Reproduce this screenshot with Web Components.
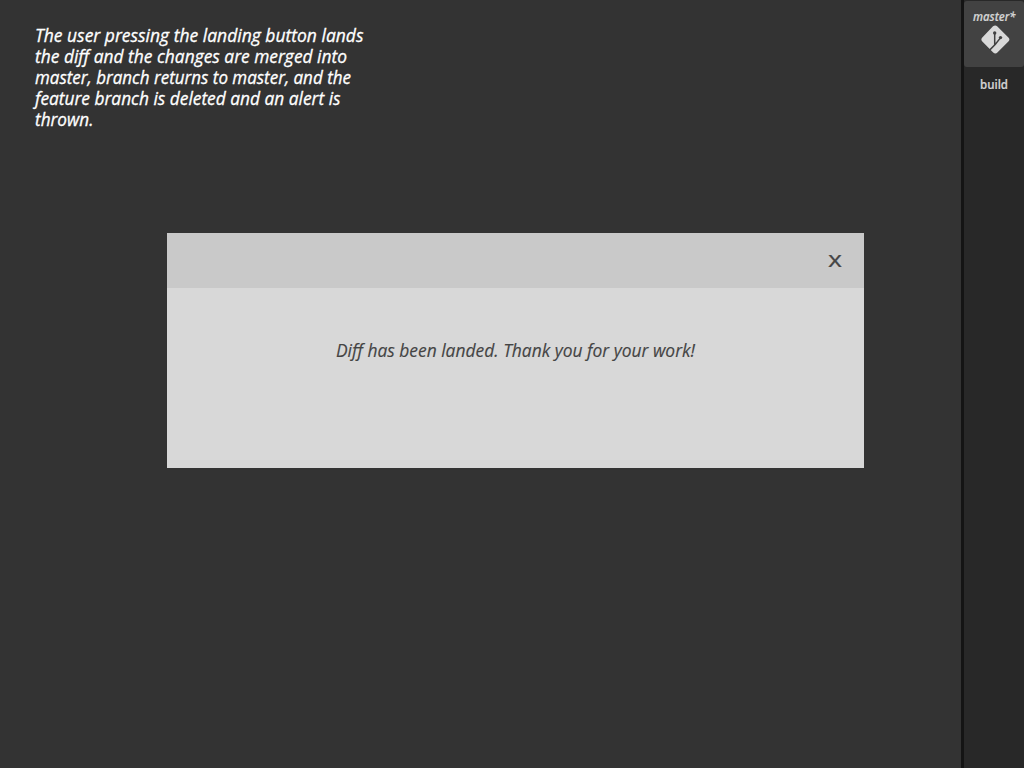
<!DOCTYPE html>
<html lang="en"><head><meta charset="utf-8"><title>Diff landed</title>
<style>html,body{margin:0;height:100%;overflow:hidden;background:#333}</style></head>
<body><app-shell></app-shell>
<script>
const define=(name,html)=>customElements.define(name,class extends HTMLElement{
  constructor(){super();this.attachShadow({mode:'open'}).innerHTML=html}
});
// A line of text condensed to a given measure.
customElements.define('fit-line',class extends HTMLElement{
  constructor(){super();this.attachShadow({mode:'open'}).innerHTML='<style>:host{display:block;white-space:nowrap}span{display:inline-block;transform-origin:0 50%}</style><span><slot></slot></span>'}
  connectedCallback(){
    const s=this.shadowRoot.querySelector('span'),w=+this.getAttribute('measure');
    this.style.width=w+'px';
    const fit=()=>{const n=s.getBoundingClientRect().width;if(n)s.style.transform=`scaleX(${w/n})`};
    requestAnimationFrame(fit);
  }
});
define('story-note',`<style>:host{display:block;padding:25px 0 0 35px;font:italic 500 18px/21px "Open Sans","Noto Sans",sans-serif;color:#fff;-webkit-text-stroke:.3px #fff}</style>
<fit-line measure="328.5">The user pressing the landing button lands</fit-line>
<fit-line measure="312">the diff and the changes are merged into</fit-line>
<fit-line measure="316">master, branch returns to master, and the</fit-line>
<fit-line measure="305.5">feature branch is deleted and an alert is</fit-line>
<fit-line measure="58.5">thrown.</fit-line>`);
define('alert-dialog',`<style>:host{display:grid;grid-template-rows:55px 180px;width:697px;height:235px;margin:103px 0 0 167px;background:#d8d8d8;color:#444;font-family:"Open Sans","Noto Sans",sans-serif}
header{background:#c9c9c9;display:flex;justify-content:flex-end;box-sizing:border-box;padding:12px 22px 0 0}
button{all:unset;width:15px;height:28px;font:500 22px/26px "Open Sans",sans-serif;display:flex;justify-content:center;-webkit-text-stroke:.2px #444}
button fit-line{flex:none}
main{padding:50px 0 0 169px;font:italic 400 18px/25px "Open Sans","Noto Sans",sans-serif;-webkit-text-stroke:.15px #444}</style>
<header><button aria-label="Close"><fit-line measure="14">x</fit-line></button></header><main><slot></slot></main>`);
define('git-icon',`<style>:host{display:block;width:30px;height:30px}svg{display:block}</style>
<svg width="30" height="30" viewBox="-0.4 0.4 30 30"><path d="M12.6 1.7Q15 .1 17 2L28 12.9Q30 15 28 17L17 28Q15 30 12.8 28L1.9 17Q0 15 1.9 13Z" fill="#d9d9d9"/><g fill="none" stroke="#414141" stroke-width="1.5"><path d="M14.3 8V21M20.2 13L15 19.7L9.2 25.5"/></g><g fill="#414141"><circle cx="14.3" cy="8.4" r="1.7"/><circle cx="20.1" cy="13" r="1.7"/></g></svg>`);
define('side-bar',`<style>:host{display:block;width:60px;border-left:3px solid #141414;background:#282828;font:600 12px/16px "Open Sans","Noto Sans",sans-serif;color:#d4d4d4;padding-top:1px}
.tab{display:flex;flex-direction:column;align-items:center;height:66px;border-radius:3px;background:#424242;box-sizing:border-box;padding:8px 0 0 1px;font-style:italic}
.tab,.build{-webkit-text-stroke:.2px #d4d4d4}
.build{display:flex;justify-content:center;padding-top:10px}</style>
<div class="tab"><fit-line measure="42.5">master*</fit-line><git-icon></git-icon></div><div class="build"><fit-line measure="28">build</fit-line></div>`);
define('app-shell',`<style>:host{display:grid;grid-template-columns:961px 63px;height:100vh;background:#333}</style>
<section><story-note></story-note><alert-dialog><fit-line measure="359">Diff has been landed. Thank you for your work!</fit-line></alert-dialog></section><side-bar></side-bar>`);
</script></body></html>
